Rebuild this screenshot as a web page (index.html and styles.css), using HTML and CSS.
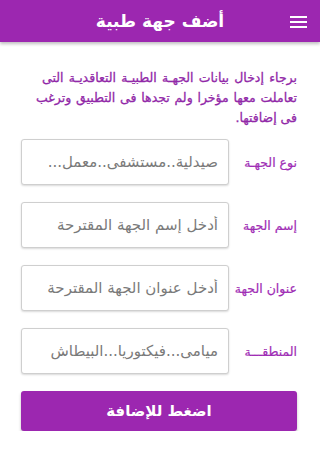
FILE: index.html
```html
<!DOCTYPE html>
<html lang="ar" dir="rtl">
  <head>
    <meta charset="UTF-8" />
    <meta name="viewport" content="width=device-width, initial-scale=1.0" />
    <title>أضف جهة طبية</title>
    <link rel="stylesheet" href="styles.css">
  </head>
  <body>
    <div class="topbar">
      <svg class="menu" width="17" height="12" viewBox="0 0 17 12">
        <rect x="0" y="0" width="17" height="2" fill="#fff" />
        <rect x="0" y="5" width="17" height="2" fill="#fff" />
        <rect x="0" y="10" width="17" height="2" fill="#fff" />
      </svg>
      <div class="title">أضف جهة طبية</div>
    </div>

    <div class="content">
      <p class="intro">
        <span class="line first">برجاء إدخال بيانات الجهـة الطبيـة التعاقديـة التى</span>
        <span class="line">تعاملت معها مؤخرا ولم تجدها فى التطبيق وترغب</span>
        <span>فى إضافتها.</span>
      </p>

      <div class="row">
        <div class="label">نوع الجهـة</div>
        <input class="field" type="text" placeholder="صيدلية..مستشفى..معمل..." />
      </div>
      <div class="row">
        <div class="label">إسم الجهة</div>
        <input class="field" type="text" placeholder="أدخل إسم الجهة المقترحة" />
      </div>
      <div class="row">
        <div class="label">عنوان الجهة</div>
        <input class="field" type="text" placeholder="أدخل عنوان الجهة المقترحة" />
      </div>
      <div class="row">
        <div class="label">المنطقـــة</div>
        <input class="field" type="text" placeholder="ميامى...فيكتوريا...البيطاش" />
      </div>

      <button class="submit">اضغط للإضافة</button>
    </div>
  </body>
</html>
```

FILE: styles.css
```css
body {
  margin: 0;
  background: #fff;
  font-family: "DejaVu Sans", sans-serif;
}
.topbar {
  position: relative;
  height: 42px;
  background: #9c27b0;
  box-shadow: 0 2px 3px rgba(0, 0, 0, 0.25);
  display: flex;
  align-items: center;
  justify-content: center;
}
.menu {
  position: absolute;
  right: 13px;
  top: 16px;
}
.title {
  color: #fff;
  font-size: 17px;
  font-weight: bold;
}
.content {
  padding: 0 23px 0 21px;
}
.intro {
  margin: 26px 0 11px 15px;
  color: #9128a8;
  font-size: 12.5px;
  line-height: 20px;
  -webkit-text-stroke: 0.3px #9128a8;
}
.intro span {
  display: block;
}
.intro .line {
  text-align: justify;
  text-align-last: justify;
}
.intro .first {
  margin-left: 6px;
}
.row {
  display: flex;
  align-items: center;
  margin-bottom: 17px;
}
.label {
  flex-shrink: 0;
  width: 68px;
  white-space: nowrap;
  color: #a02db5;
  font-size: 12.5px;
  -webkit-text-stroke: 0.2px #a02db5;
}
.field {
  flex: 1;
  min-width: 0;
  height: 46px;
  box-sizing: border-box;
  border: 1px solid #cfcfcf;
  border-radius: 3px;
  box-shadow: 0 1px 2px rgba(0, 0, 0, 0.15);
  padding: 0 10px;
  font-family: "DejaVu Sans", sans-serif;
  font-size: 15px;
  direction: rtl;
}
.field::placeholder {
  color: #7a7a7a;
}
.submit {
  display: block;
  width: 100%;
  height: 40px;
  margin-top: 5px;
  border: none;
  border-radius: 3px;
  background: #9c27b0;
  box-shadow: 0 2px 3px rgba(0, 0, 0, 0.25);
  color: #fff;
  font-family: "DejaVu Sans", sans-serif;
  font-size: 15px;
  font-weight: bold;
}
```
